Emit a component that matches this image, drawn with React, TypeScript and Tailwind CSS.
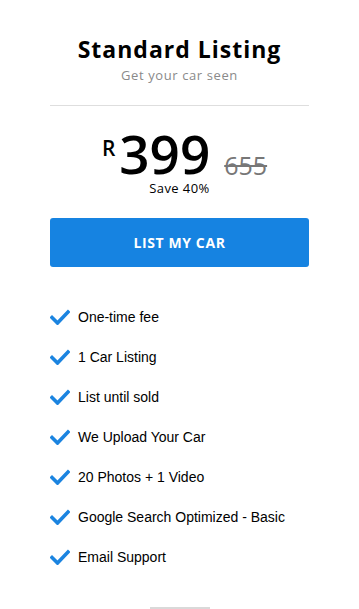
const features = [
  'One-time fee',
  '1 Car Listing',
  'List until sold',
  'We Upload Your Car',
  '20 Photos + 1 Video',
  'Google Search Optimized - Basic',
  'Email Support',
];

function CheckMark() {
  return (
    <svg className="w-[20px] h-[16px] shrink-0" viewBox="0 0 20 16" fill="none">
      <path d="M2 8.5l5.5 5.5L18 3" stroke="#1b84e0" strokeWidth={3.6} strokeLinecap="square" />
    </svg>
  );
}

export default function App() {
  return (
    <div className="w-[359px] h-[609px] bg-white overflow-hidden flex flex-col items-center font-['Open_Sans',sans-serif]">
      <div className="w-[259px] flex flex-col items-center pt-[34px]">
        {/* Header */}
        <h1 className="text-[23px] leading-[30px] font-bold text-black tracking-[1px]">Standard Listing</h1>
        <p className="text-[13px] leading-[18px] text-[#8a8a8a] mt-[2px] tracking-[0.6px]">Get your car seen</p>
        <div className="w-full h-px bg-[#dedede] mt-[21px]" />

        {/* Price */}
        <div className="flex items-start mt-[26px] ml-[10px] text-black">
          <span className="text-[21px] leading-[20px] font-semibold mt-[6px] mr-[4px]">R</span>
          <span className="text-[53px] leading-[44px] font-semibold">399</span>
          <span className="text-[25px] leading-[25px] text-[#777] line-through ml-[14px] mt-[21px]">655</span>
        </div>
        <p className="text-[13px] leading-[16px] text-black font-medium mt-[2px] tracking-[0.4px]">Save 40%</p>

        <button
          type="button"
          className="w-full h-[49px] mt-[22px] rounded-[3px] bg-[#1683e1] text-white text-[14px] font-bold tracking-[0.6px]"
        >
          LIST MY CAR
        </button>

        {/* Features */}
        <ul className="w-full mt-[40px] flex flex-col gap-[20px] font-['Liberation_Sans',Arial,sans-serif]">
          {features.map((f) => (
            <li key={f} className="flex items-center gap-[8px] h-[20px]">
              <CheckMark />
              <span className="text-[14px] leading-[20px] text-black">{f}</span>
            </li>
          ))}
        </ul>

        <div className="w-[60px] h-[2px] bg-[#d9d9d9] mt-[40px]" />
      </div>
    </div>
  );
}
